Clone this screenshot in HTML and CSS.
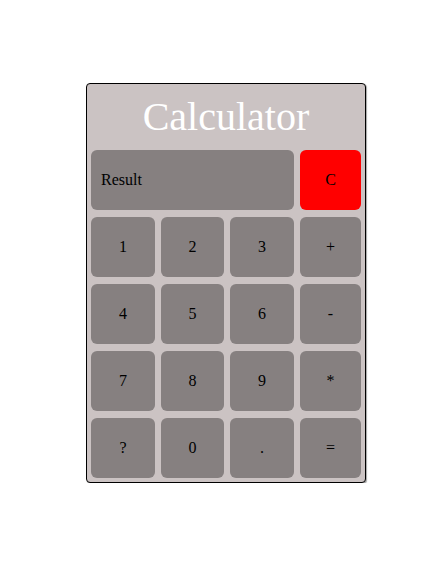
FILE: index.html
```html
<!DOCTYPE html>
<html>
<head>
<meta charset="utf-8">
<title>Calculator</title>
<link rel="stylesheet" href="styles.css">
</head>
<body>
<div class="calc">
  <div class="title">Calculator</div>
  <div class="keys">
    <div class="key result">Result</div>
    <div class="key clear">C</div>
    <div class="key">1</div>
    <div class="key">2</div>
    <div class="key">3</div>
    <div class="key">+</div>
    <div class="key">4</div>
    <div class="key">5</div>
    <div class="key">6</div>
    <div class="key">-</div>
    <div class="key">7</div>
    <div class="key">8</div>
    <div class="key">9</div>
    <div class="key">*</div>
    <div class="key">?</div>
    <div class="key">0</div>
    <div class="key">.</div>
    <div class="key">=</div>
  </div>
</div>
</body>
</html>
```
FILE: styles.css
```css
html, body {
  margin: 0;
  padding: 0;
  background: #ffffff;
}
body {
  padding: 83px 0 0 86px;
  font-family: "Liberation Serif", "Times New Roman", serif;
  font-size: 16px;
  color: #000;
}
.calc {
  width: 278px;
  border: 1px solid #000;
  border-radius: 4px;
  background: #cbc3c3;
  padding: 0 0 4px 0;
  box-shadow: 1px 1px 1px rgba(0,0,0,0.35);
}
.title {
  padding-top: 10px;
  height: 46px;
  line-height: 46px;
  font-size: 40px;
  color: #ffffff;
  text-align: center;
  margin-bottom: 10px;
}
.keys {
  display: grid;
  grid-template-columns: 64px 63px 64px 61px;
  grid-auto-rows: 60.25px;
  column-gap: 6px;
  row-gap: 6.75px;
  padding: 0 4px;
}
.key {
  background: #868080;
  border-radius: 6px;
  display: flex;
  align-items: center;
  justify-content: center;
}
.result {
  grid-column: span 3;
  justify-content: flex-start;
  padding-left: 10px;
}
.clear {
  background: #ff0000;
}
```
